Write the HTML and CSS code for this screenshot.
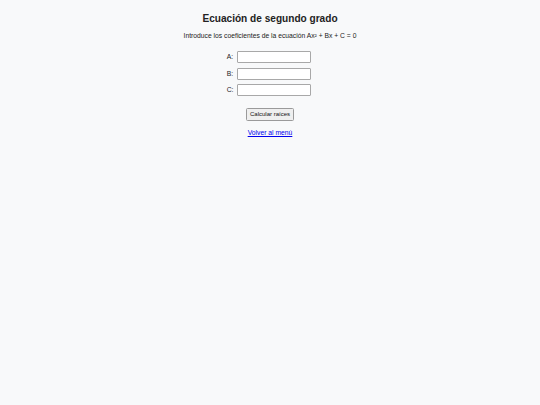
FILE: index.html
```html
<!DOCTYPE html>
<html lang="es">
<head>
<meta charset="utf-8">
<title>Ecuación de segundo grado</title>
<link rel="stylesheet" href="styles.css">
</head>
<body>
<main class="page">
  <h2 class="title">Ecuación de segundo grado</h2>
  <p class="intro">Introduce los coeficientes de la ecuación Ax² + Bx + C = 0</p>
  <form class="form">
    <div class="row"><label class="label" for="a">A:</label><input class="field" id="a" type="text"></div>
    <div class="row"><label class="label" for="b">B:</label><input class="field" id="b" type="text"></div>
    <div class="row"><label class="label" for="c">C:</label><input class="field" id="c" type="text"></div>
    <button class="btn" type="button">Calcular raíces</button>
  </form>
  <a class="back" href="#">Volver al menú</a>
</main>
</body>
</html>
```

FILE: styles.css
```css
html, body {
  margin: 0;
  padding: 0;
}
body {
  background: #f8f9fa;
  color: #222;
  font-family: "Liberation Sans", Arial, sans-serif;
  font-size: 6.75px;
  width: 540px;
  height: 405px;
}
.page {
  display: flex;
  flex-direction: column;
  align-items: center;
  padding-top: 13px;
}
.title {
  margin: 0;
  font-size: 10.1px;
  line-height: 12px;
  font-weight: bold;
  color: #222;
}
.intro {
  margin: 7px 0 0;
  line-height: 8px;
  color: #222;
}
.form {
  margin-top: 11px;
  display: flex;
  flex-direction: column;
  align-items: center;
  gap: 4.5px;
}
.row {
  display: flex;
  align-items: center;
  gap: 4px;
  margin-right: 2.6px;
}
.label {
  width: 6.5px;
  line-height: 8px;
  white-space: nowrap;
}
.field {
  box-sizing: border-box;
  width: 73.5px;
  height: 12px;
  margin: 0;
  padding: 0 2px;
  border: 1px solid #a8a8a8;
  border-radius: 1px;
  background: #fff;
  font-size: 6.75px;
}
.btn {
  margin-top: 7.5px;
  box-sizing: border-box;
  width: 48px;
  height: 12.5px;
  padding: 0;
  font-family: "Liberation Sans", Arial, sans-serif;
  font-size: 6px;
  color: #111;
  background: #efefef;
  border: 1px solid #9a9a9a;
  border-radius: 1.5px;
}
.back {
  margin-top: 8px;
  line-height: 8px;
  color: #0000ee;
  text-decoration: underline;
}
```
